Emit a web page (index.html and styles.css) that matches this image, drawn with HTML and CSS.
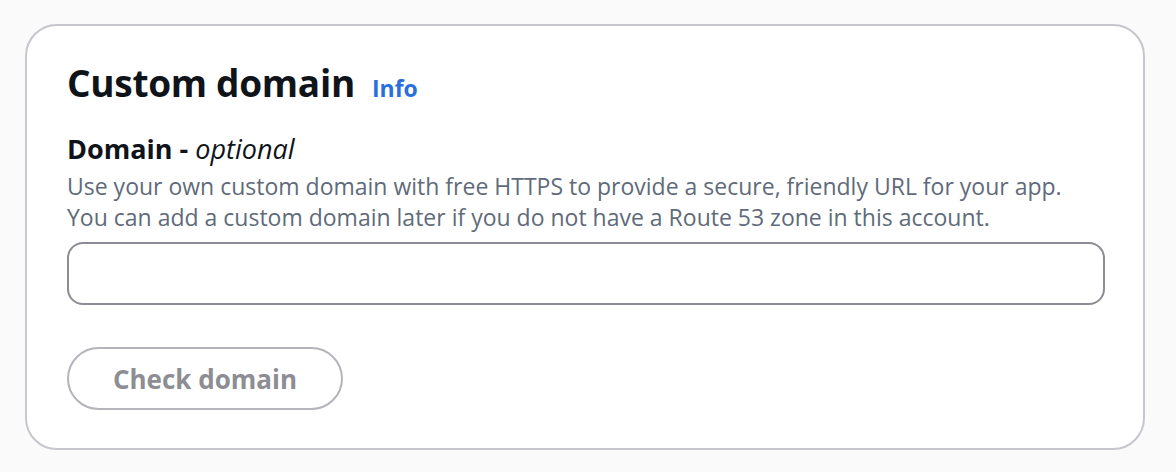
FILE: index.html
```html
<!DOCTYPE html>
<html lang="en">
<head>
<meta charset="utf-8">
<title>Custom domain</title>
<link rel="stylesheet" href="styles.css">
</head>
<body>
  <section class="card">
    <header class="card-header">
      <h2 class="title">Custom domain</h2>
      <a class="info" href="#">Info</a>
    </header>
    <div class="field">
      <label class="label" for="domain">Domain - <i>optional</i></label>
      <p class="desc">Use your own custom domain with free HTTPS to provide a secure, friendly URL for your app.<br>You can add a custom domain later if you do not have a Route 53 zone in this account.</p>
      <input class="input" id="domain" type="text">
    </div>
    <button class="btn" type="button" disabled>Check domain</button>
  </section>
</body>
</html>
```

FILE: styles.css
```css
html, body {
  margin: 0;
  padding: 0;
  background: #fafafa;
}
body {
  padding: 24px 31px 0 25px;
  font-family: "Open Sans", "Noto Sans", sans-serif;
  color: #0f141a;
}
.card {
  background: #ffffff;
  border: 2px solid #c6c6cd;
  border-radius: 32px;
  padding: 33px 40px 38px 40px;
  display: flex;
  flex-direction: column;
  align-items: flex-start;
}
.card-header {
  display: flex;
  align-items: baseline;
  gap: 17px;
}
.title {
  margin: 0;
  font-size: 37px;
  line-height: 47px;
  font-weight: 700;
  letter-spacing: -0.3px;
}
.info {
  font-size: 23px;
  font-weight: 700;
  color: #2a6fdb;
  text-decoration: none;
}
.field {
  align-self: stretch;
  margin-top: 25px;
  display: flex;
  flex-direction: column;
}
.label {
  font-size: 27px;
  line-height: 36px;
  font-weight: 700;
}
.label i {
  font-weight: 400;
}
.desc {
  margin: 4px 0 0 0;
  font-size: 23px;
  line-height: 31px;
  color: #5f6b7a;
}
.input {
  margin-top: 9px;
  height: 63px;
  box-sizing: border-box;
  border: 2px solid #8c8c94;
  border-radius: 16px;
  background: #ffffff;
  width: 1038px;
  padding: 0 24px;
  font: inherit;
  font-size: 28px;
}
.btn {
  margin-top: 42px;
  height: 63px;
  width: 276px;
  box-sizing: border-box;
  border: 2px solid #b4b4bb;
  border-radius: 32px;
  background: #ffffff;
  color: #8d8d94;
  font-family: inherit;
  font-size: 26px;
  font-weight: 700;
  padding: 0;
}
```
